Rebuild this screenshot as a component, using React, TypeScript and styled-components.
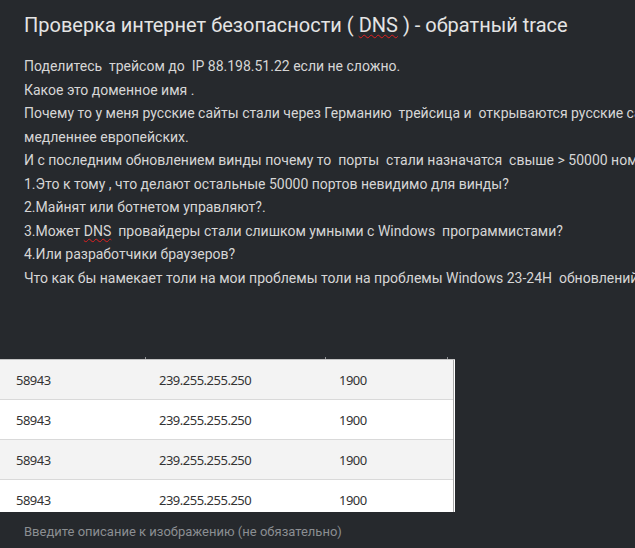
import React from "react";
import styled, { createGlobalStyle } from "styled-components";

const Global = createGlobalStyle`
  html, body {
    margin: 0;
    padding: 0;
    background: #26292d;
    overflow: hidden;
  }
  body {
    width: 635px;
    height: 548px;
  }
`;

const Page = styled.div`
  width: 635px;
  height: 548px;
  overflow: hidden;
  display: flex;
  flex-direction: column;
  background: #26292d;
`;

const Text = styled.div`
  padding: 11px 0 0 24px;
  display: flex;
  flex-direction: column;
  font-family: Roboto, "Noto Sans", sans-serif;
`;

const Title = styled.h1`
  margin: 0;
  font-size: 20px;
  line-height: 28px;
  font-weight: 400;
  color: #e4e4e4;
  white-space: pre;
`;

const Body = styled.div`
  margin-top: 16px;
  display: flex;
  flex-direction: column;
`;

const Line = styled.div`
  font-size: 14px;
  line-height: 23.5px;
  color: #d6d6d6;
  white-space: pre;
`;

const Spell = styled.span`
  text-decoration: underline wavy #e02020;
  text-decoration-thickness: 1px;
  text-underline-offset: 2px;
`;

const Figure = styled.div`
  margin-top: 67px;
  width: 455px;
  display: flex;
  flex-direction: column;
`;

const Ticks = styled.div`
  height: 2px;
  display: grid;
  grid-template-columns: 146px 180px 122px;
`;

const Tick = styled.span`
  border-right: 1px solid #8e9094;
  height: 2px;
`;

const Frame = styled.div`
  height: 152px;
  overflow: hidden;
  background: #ffffff;
  border-top: 1px solid #c4c4c4;
  padding-right: 1px;
`;

const Table = styled.div`
  border-right: 1px solid #a9a9a9;
  display: flex;
  flex-direction: column;
  font-family: "Noto Sans", "Open Sans", sans-serif;
`;

const Row = styled.div<{ $alt: boolean }>`
  height: 39px;
  flex: none;
  border-bottom: 1px solid #d9d9d9;
  background: ${(p) => (p.$alt ? "#f3f3f3" : "#ffffff")};
  display: grid;
  grid-template-columns: 143px 180px 1fr;
  align-items: center;
  padding-left: 16px;
  font-size: 13px;
  letter-spacing: -0.5px;
  color: #333333;
`;

const Caption = styled.div`
  margin-top: 10px;
  padding-left: 24px;
  font-family: Roboto, "Noto Sans", sans-serif;
  font-size: 13px;
  line-height: 20px;
  color: #8b8e92;
  white-space: pre;
`;

const lines: React.ReactNode[] = [
  "Поделитесь  трейсом до  IP 88.198.51.22 если не сложно.",
  "Какое это доменное имя .",
  "Почему то у меня русские сайты стали через Германию  трейсица и  открываются русские сайты",
  "медленнее европейских.",
  "И с последним обновлением винды почему то  порты  стали назначатся  свыше > 50000 номеров",
  "1.Это к тому , что делают остальные 50000 портов невидимо для винды?",
  "2.Майнят или ботнетом управляют?.",
  <>
    3.Может <Spell>DNS</Spell>  провайдеры стали слишком умными с Windows  программистами?
  </>,
  "4.Или разработчики браузеров?",
  "Что как бы намекает толи на мои проблемы толи на проблемы Windows 23-24H  обновлений",
];

const rows = [0, 1, 2, 3];

export default function App() {
  return (
    <Page>
      <Global />
      <Text>
        <Title>
          Проверка интернет безопасности ( <Spell>DNS</Spell> ) - обратный trace
        </Title>
        <Body>
          {lines.map((l, i) => (
            <Line key={i}>{l}</Line>
          ))}
        </Body>
      </Text>
      <Figure>
        <Ticks>
          <Tick />
          <Tick />
          <Tick />
        </Ticks>
        <Frame>
          <Table>
            {rows.map((r) => (
              <Row key={r} $alt={r % 2 === 0}>
                <span>58943</span>
                <span>239.255.255.250</span>
                <span>1900</span>
              </Row>
            ))}
          </Table>
        </Frame>
      </Figure>
      <Caption>Введите описание к изображению (не обязательно)</Caption>
    </Page>
  );
}
